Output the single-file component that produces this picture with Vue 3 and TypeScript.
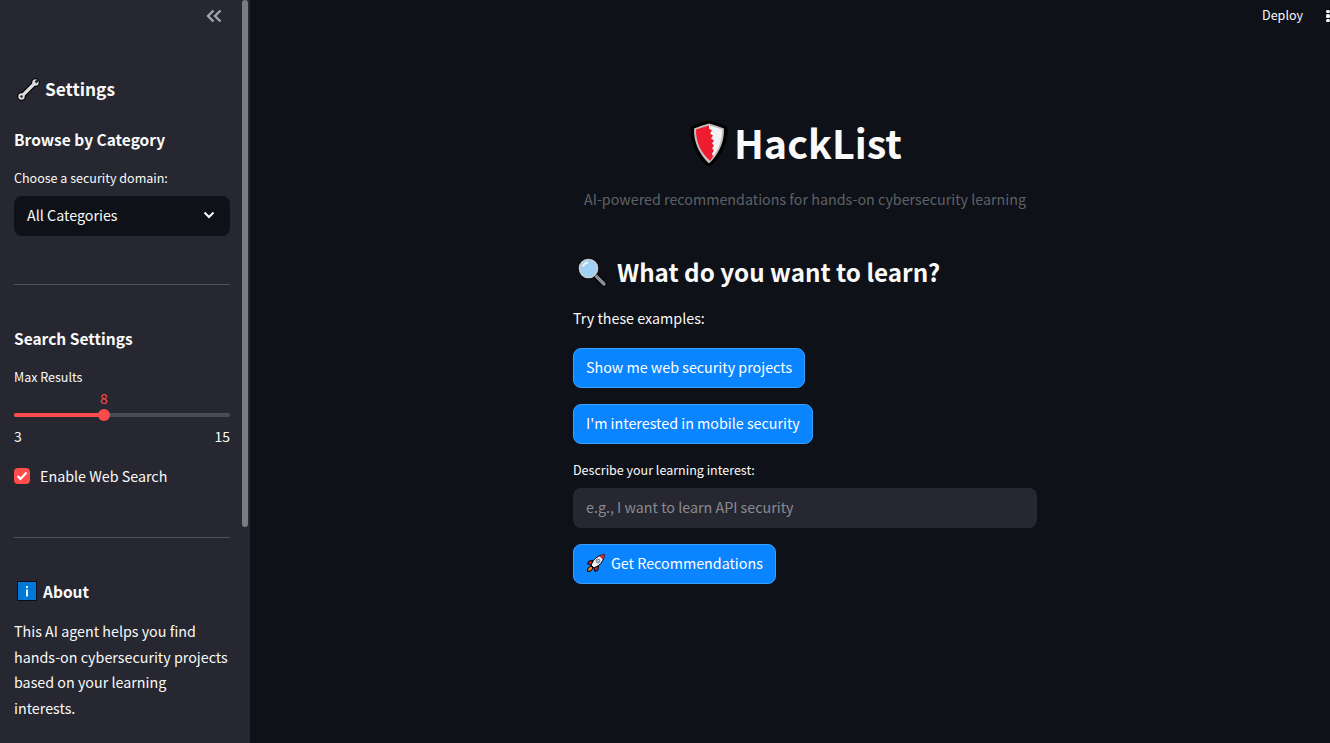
<template>
  <div class="app">
    <aside class="sidebar">
      <button class="collapse" aria-label="Close sidebar">
        <svg width="16" height="14" viewBox="0 0 16 14" fill="none" stroke="#a3a4aa" stroke-width="2.4">
          <path d="M7.5 1.5 2 7l5.5 5.5M14.5 1.5 9 7l5.5 5.5" />
        </svg>
      </button>
      <h2 class="settings">
        <svg class="wrench" width="23" height="23" viewBox="0 0 23 23">
          <path d="M4.500 18.500 18.500 4.500" stroke="#000" stroke-width="5.500" stroke-linecap="round" />
          <circle cx="4.500" cy="18.500" r="4.300" fill="#000" />
          <circle cx="18.500" cy="4.500" r="4.300" fill="#000" />
          <path d="M4.500 18.500 18.500 4.500" stroke="#dcdcdc" stroke-width="3.200" stroke-linecap="round" />
          <circle cx="4.500" cy="18.500" r="3.200" fill="#dcdcdc" />
          <circle cx="18.500" cy="4.500" r="3.200" fill="#dcdcdc" />
          <circle cx="4.500" cy="18.500" r="1.200" fill="#222" />
          <path d="M18.500 4.500 21.500 1.500" stroke="#262730" stroke-width="2.500" />
        </svg>
        Settings
      </h2>
      <h3 class="browse">Browse by Category</h3>
      <label class="small-label">Choose a security domain:</label>
      <div class="select">
        <span>{{ category }}</span>
        <svg width="12" height="8" viewBox="0 0 12 8" fill="none" stroke="#fafafa" stroke-width="2">
          <path d="M1.5 1.5 6 6l4.5-4.5" />
        </svg>
      </div>
      <hr class="rule-one" />
      <h3 class="search-settings">Search Settings</h3>
      <label class="small-label max-label">Max Results</label>
      <div class="slider">
        <div class="slider-value" :style="{ left: percent + '%' }">{{ maxResults }}</div>
        <div class="track">
          <div class="fill" :style="{ width: percent + '%' }"></div>
          <div class="thumb" :style="{ left: percent + '%' }"></div>
        </div>
        <div class="range"><span>{{ min }}</span><span>{{ max }}</span></div>
      </div>
      <div class="check-row">
        <span class="checkbox">
          <svg width="12" height="10" viewBox="0 0 12 10" fill="none" stroke="#fff" stroke-width="2.2">
            <path d="M1.5 5 4.5 8l6-6.5" />
          </svg>
        </span>
        Enable Web Search
      </div>
      <hr class="rule-two" />
      <h3 class="about">
        <svg width="20" height="20" viewBox="0 0 20 20">
          <rect x="0.5" y="0.5" width="19" height="19" fill="#0078d7" stroke="#05101c" />
          <rect x="9" y="5" width="2" height="2" fill="#e8f2fb" />
          <rect x="9" y="8.500" width="2" height="7" fill="#e8f2fb" />
        </svg>
        About
      </h3>
      <p class="about-text">This AI agent helps you find<br />hands-on cybersecurity projects<br />based on your learning<br />interests.</p>
      <div class="scrollbar"></div>
    </aside>

    <main class="main">
      <header class="toolbar">
        <span class="deploy">Deploy</span>
        <span class="dots"><i></i><i></i><i></i></span>
      </header>
      <div class="content">
        <h1 class="title">
          <svg class="shield" width="38" height="48" viewBox="0 0 38 48">
            <path d="M19 .5C24 2 31 4 36 6q1.500 1 1.500 4C37.500 25 30 38 19 47.500 8 38 .5 25 .5 10q0-3 1.500-4C7 4 14 2 19 .5Z" fill="#000" />
            <path d="M19 3.500C24 5 29 6.500 34 8.500 34.500 23 28 35 19 43.500 10 35 3.500 23 4 8.500 9 6.500 14 5 19 3.500Z" fill="#bdbdbd" />
            <path d="M19 5.500C24 7 28 8 32 9.500 32.500 22 27 33 19 41 11 33 5.500 22 6 9.500 10 8 14 7 19 5.500Z" fill="#f2f2f2" />
            <path d="M19 5.500v3l3 2-2 3 3 2-2 3 3 2-2 3 2 2-2 3 2 2-2 3 1 3-3 4.500C11 33 5.500 22 6 9.500 10 8 14 7 19 5.500Z" fill="#ed1c2e" />
          </svg>
          <span>HackList</span>
        </h1>
        <p class="subtitle">AI-powered recommendations for hands-on cybersecurity learning</p>

        <h2 class="learn">
          <svg width="32" height="30" viewBox="0 0 32 30">
            <path d="M19 18 28 27" stroke="#000" stroke-width="6" stroke-linecap="round" />
            <path d="M19 18 28 27" stroke="#8a8f94" stroke-width="3.500" stroke-linecap="round" />
            <circle cx="12.500" cy="11.500" r="10" fill="#9fd0f5" stroke="#000" stroke-width="1" />
            <circle cx="12.500" cy="11.500" r="9" fill="#9fd0f5" stroke="#c9ccd0" stroke-width="1.500" />
            <path d="M7 9.500a6 6 0 0 1 5-4" stroke="#e8f5ff" stroke-width="2" fill="none" />
          </svg>
          What do you want to learn?
        </h2>
        <p class="try">Try these examples:</p>
        <div class="examples">
          <button v-for="item in examples" :key="item" class="primary">{{ item }}</button>
        </div>
        <label class="small-label interest-label">Describe your learning interest:</label>
        <input class="interest" type="text" placeholder="e.g., I want to learn API security" />
        <button class="primary get">
          <svg width="20" height="20" viewBox="0 0 20 20">
            <path d="M5 13 2 15l-.5 3.500L5 18l2-3Z" fill="#f58220" stroke="#000" stroke-width="1" />
            <path d="M7.500 7.500 3 8l-1.500 3L5 12ZM12.500 12.500 12 17l-3 1.500L8 15Z" fill="#c8202f" stroke="#000" stroke-width="1" />
            <path d="M18.500 1.500C14 2 10 4 7.500 7.500L5 12l3 3 4.500-2.500C16 10 18 6 18.500 1.500Z" fill="#eef0f2" stroke="#000" stroke-width="1" />
            <path d="M18.500 1.500C16.500 1.700 15 2.300 13.500 3.200L16.800 6.500C17.700 5 18.300 3.500 18.500 1.500Z" fill="#d8232f" />
            <circle cx="12" cy="8" r="2" fill="#a9c4d6" stroke="#445" stroke-width="0.6" />
          </svg>
          Get Recommendations
        </button>
      </div>
    </main>
  </div>
</template>

<script setup lang="ts">
import { computed, ref } from 'vue'

const category = ref<string>('All Categories')
const min = 3
const max = 15
const maxResults = ref<number>(8)

const percent = computed(() => ((maxResults.value - min) / (max - min)) * 100)

const examples: string[] = [
  'Show me web security projects',
  "I'm interested in mobile security"
]
</script>

<style>
html,
body {
  margin: 0;
  background: #0e1117;
}
</style>

<style scoped>
.app {
  display: flex;
  height: 743px;
  overflow: hidden;
  color: #fafafa;
  font-family: "Noto Sans CJK SC", "Noto Sans", sans-serif;
  font-size: 14.3px;
  line-height: 25.6px;
}

h1,
h2,
h3,
p {
  margin: 0;
}

.sidebar {
  position: relative;
  flex: 0 0 250px;
  box-sizing: border-box;
  height: 743px;
  overflow: hidden;
  padding: 0 20px 0 14px;
  background: #262730;
}

.collapse {
  display: block;
  width: 16px;
  height: 14px;
  margin: 9px 0 0 192px;
  padding: 0;
  border: 0;
  background: none;
}

.settings {
  display: flex;
  align-items: center;
  gap: 5px;
  height: 32px;
  margin-top: 50px;
  padding-left: 3px;
  font-size: 17.3px;
  line-height: 32px;
  font-weight: 700;
}

.browse,
.search-settings,
.about {
  font-size: 15.5px;
  font-weight: 700;
  line-height: 28px;
}

.browse {
  margin-top: 20px;
}

.small-label {
  display: block;
  font-size: 12.53px;
  line-height: 20px;
}

.browse + .small-label {
  margin-top: 15px;
}

.select {
  display: flex;
  align-items: center;
  justify-content: space-between;
  box-sizing: border-box;
  height: 40px;
  margin-top: 8px;
  padding: 0 15px 2px 13px;
  border-radius: 8px;
  background: #0e1117;
}

hr {
  height: 1px;
  margin: 0;
  border: 0;
  background: rgba(250, 250, 250, 0.2);
}

.rule-one {
  margin-top: 48px;
}

.search-settings {
  margin-top: 39px;
}

.max-label {
  margin-top: 15px;
}

.slider {
  position: relative;
  margin-top: 9px;
  padding-top: 17px;
}

.slider-value {
  position: absolute;
  top: -8px;
  transform: translateX(-50%);
  color: #ff4b4b;
  font-size: 14px;
  line-height: 20px;
}

.track {
  position: relative;
  height: 4px;
  border-radius: 2px;
  background: #4a4b55;
}

.fill {
  height: 4px;
  border-radius: 2px;
  background: #ff4b4b;
}

.thumb {
  position: absolute;
  top: -4px;
  width: 12px;
  height: 12px;
  margin-left: -6px;
  border-radius: 50%;
  background: #ff4b4b;
}

.range {
  display: flex;
  justify-content: space-between;
  margin-top: 9px;
  font-size: 14px;
  line-height: 20px;
}

.check-row {
  display: flex;
  align-items: center;
  gap: 10px;
  height: 26px;
  margin-top: 17px;
}

.checkbox {
  display: flex;
  align-items: center;
  justify-content: center;
  width: 16px;
  height: 16px;
  border-radius: 4px;
  background: #ff4b4b;
}

.rule-two {
  margin-top: 48px;
}

.about {
  display: flex;
  align-items: center;
  gap: 6px;
  margin-top: 39px;
  padding-left: 3px;
}

.about-text {
  margin-top: 13px;
}

.scrollbar {
  position: absolute;
  top: 0;
  left: 242px;
  width: 6px;
  height: 527px;
  border-radius: 3px;
  background: #7b7b84;
}

.main {
  position: relative;
  flex: 1;
  min-width: 0;
}

.toolbar {
  position: absolute;
  top: 0;
  right: 0;
  display: flex;
  align-items: center;
  height: 32px;
  font-size: 12.53px;
}

.deploy {
  margin-right: 23px;
  padding-bottom: 2px;
}

.dots {
  display: flex;
  flex-direction: column;
  gap: 1px;
  width: 4px;
}

.dots i {
  display: block;
  width: 4px;
  height: 3.5px;
  border-radius: 1.500px;
  background: #fafafa;
}

.content {
  display: flex;
  flex-direction: column;
  align-items: flex-start;
  width: 464px;
  margin-left: 323px;
}

.title {
  display: flex;
  align-items: center;
  justify-content: center;
  gap: 6px;
  align-self: stretch;
  box-sizing: border-box;
  height: 56px;
  margin-top: 114px;
  padding-right: 18px;
  font-size: 39.5px;
  line-height: 56px;
  font-weight: 700;
}

.shield {
  margin-top: 4px;
}

.subtitle {
  align-self: stretch;
  margin-top: 16px;
  color: #5f6168;
  text-align: center;
}

.learn {
  display: flex;
  align-items: center;
  gap: 9px;
  height: 40px;
  margin-top: 40px;
  padding-left: 3px;
  font-size: 24.2px;
  line-height: 40px;
  font-weight: 700;
}

.try {
  margin-top: 13px;
}

.examples {
  display: flex;
  flex-direction: column;
  align-items: flex-start;
  gap: 16px;
  margin-top: 18px;
}

.primary {
  display: flex;
  align-items: center;
  gap: 5px;
  box-sizing: border-box;
  height: 40px;
  padding: 0 12px 2px;
  border: 1px solid #3aa0ff;
  border-radius: 8px;
  background: #0a84ff;
  color: #fff;
  font: inherit;
}

.interest-label {
  margin-top: 16px;
}

.interest {
  box-sizing: border-box;
  width: 464px;
  height: 40px;
  margin-top: 8px;
  padding: 0 13px 4px;
  border: 0;
  border-radius: 8px;
  outline: none;
  background: #262730;
  color: #fafafa;
  font: inherit;
}

.interest::placeholder {
  color: #8a8c93;
}

.get {
  margin-top: 16px;
}
</style>
